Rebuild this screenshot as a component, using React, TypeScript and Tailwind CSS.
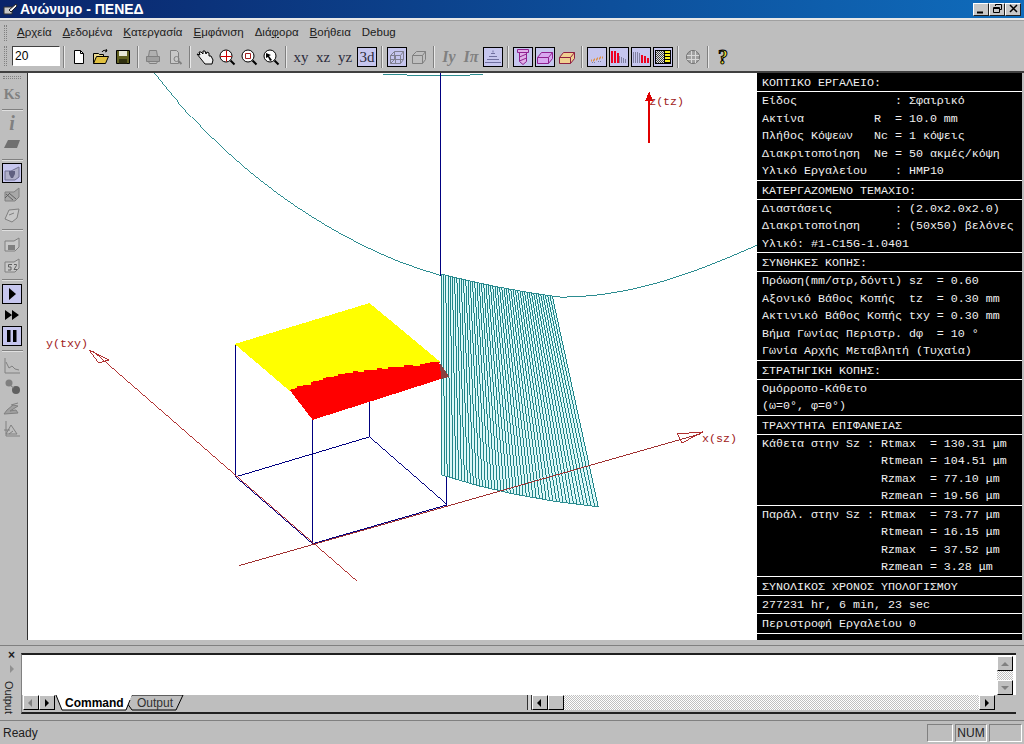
import React from "react";

const MONO = "font-['Liberation_Mono',monospace]";

const Sep = () => <div className="w-[2px] h-[22px] mx-[3px] border-l border-[#808080] bg-[#e8e8e8] shrink-0" />;

const Btn = ({ on, children }: { on?: boolean; children: React.ReactNode }) => (
  <div className="w-[22px] h-[22px] shrink-0 flex items-center justify-center">
    <div
      className={
        on
          ? "w-[20px] h-[20px] border border-black bg-[#c6c6ee] flex items-center justify-center"
          : "w-[20px] h-[20px] flex items-center justify-center"
      }
    >
      {children}
    </div>
  </div>
);

const Ico = ({ children }: { children: React.ReactNode }) => (
  <svg width="18" height="18" viewBox="0 0 18 18" fill="none" strokeWidth="1">
    {children}
  </svg>
);

const Label = ({ children }: { children: React.ReactNode }) => (
  <span className="font-['Liberation_Serif',serif] text-[15px] leading-none text-[#2a2a3a]">{children}</span>
);

const Row = ({ children }: { children: React.ReactNode }) => (
  <div className="h-[17.5px] leading-[18px] px-[5px] whitespace-pre">{children}</div>
);

const Head = ({ children }: { children: React.ReactNode }) => (
  <div className="h-[19px] leading-[20px] px-[5px] whitespace-pre border-b border-white">{children}</div>
);

const Sect = ({ rows }: { rows: string[] }) => (
  <div className="border-b border-white">
    {rows.map((r, i) => (
      <Row key={i}>{r}</Row>
    ))}
  </div>
);

const Underlined = ({ pre, u, post }: { pre?: string; u: string; post: string }) => (
  <span className="mr-[11px]">
    {pre}
    <span className="underline">{u}</span>
    {post}
  </span>
);

// wire lines of the tool flank, top and bottom curves are quadratic
const stripes = Array.from({ length: 50 }, (_, i) => {
  const t = i / 49;
  const q = (a: number, b: number, c: number) => (1 - t) * (1 - t) * a + 2 * t * (1 - t) * b + t * t * c;
  return {
    x1: q(441, 495, 552),
    y1: q(274, 288, 296),
    x2: q(441, 510, 598),
    y2: q(475, 498, 507),
  };
});

const Canvas = () => (
  <svg viewBox="27 73 730 567" className="block w-full h-full" fill="none" shapeRendering="crispEdges">
    <path d="M154 73 C 215 152 300 222 400 262 C 470 287 520 297 565 297 C 630 296 690 275 757 245" stroke="#2c8c90" />
    <path d="M382 74 L 420 75 L 462 75 L 483 74" stroke="#2c8c90" />
    <line x1="440.500" y1="73" x2="440.500" y2="276" stroke="#000080" />

    <line x1="369" y1="400" x2="369" y2="437" stroke="#000080" />
    <line x1="446.500" y1="378" x2="446.500" y2="505" stroke="#000080" />
    <polyline points="235,345 235,477 312,544 447,505 369,437 235,477" stroke="#000080" />
    <line x1="312" y1="420" x2="312" y2="544" stroke="#000080" />

    <path d="M441 274 Q 495 288 552 296 L 598 507 Q 510 498 441 475 Z" fill="#dcf8f8" />
    {stripes.map((s, i) => (
      <line key={i} x1={s.x1} y1={s.y1} x2={s.x2} y2={s.y2} stroke="#1f8488" />
    ))}
    <path d="M441 274 Q 495 288 552 296" stroke="#2c8c90" />
    <path d="M441 475 Q 510 498 598 507" stroke="#2c8c90" />

    <polygon points="234,344 369,303 440,362 289,391" fill="#ffff00" />
    <polygon
      points="289,390 296,388 296,386 310,385 310,382 322,380 322,378 337,376 337,374 352,373 352,371 363,372 363,370 376,370 376,368 387,369 387,367 404,367 404,365 420,366 420,364 430,363 430,362 438,362 447,377 312,420"
      fill="#ff0000"
    />
    <polygon points="439,362 449,377 441,379" fill="#8a4040" />

    <line x1="356" y1="581" x2="92" y2="351" stroke="#b03030" />
    <polygon points="88,350 108,360 98,363" stroke="#b03030" />
    <line x1="238" y1="566" x2="700" y2="434" stroke="#a03030" />
    <polygon points="703,432 677,434 682,443" stroke="#b03030" />
    <line x1="649" y1="143" x2="649" y2="97" stroke="#e00000" strokeWidth="2" />
    <polygon points="649,91 645,101 653,101" fill="#e00000" />

    <text x="649" y="105" className={MONO} fontSize="11.67" fill="#a02020">z(tz)</text>
    <text x="45" y="347" className={MONO} fontSize="11.67" fill="#a02020">y(txy)</text>
    <text x="702" y="442" className={MONO} fontSize="11.67" fill="#a02020">x(sz)</text>
  </svg>
);

const TopToolbar = () => (
  <div className="h-[27px] flex items-start pt-[2px] shrink-0 pl-[4px]">
    <div className="w-[3px] h-[20px] mr-[5px] border-x border-dotted border-[#808080]" />
    <div className="w-[48px] h-[20px] bg-white border border-t-[#404040] border-l-[#404040] border-r-white border-b-white pl-[2px] text-[12px] leading-[18px] text-black">
      20
    </div>
    <Sep />
    <Btn>
      <Ico>
        <path d="M4.500 2.500h6l3 3v10h-9z" fill="#fff" stroke="#000" />
        <path d="M10.500 2.500v3h3" stroke="#000" />
      </Ico>
    </Btn>
    <Btn>
      <Ico>
        <path d="M1.500 15.500v-10h5l1 1h4v2" fill="#e8d890" stroke="#000" />
        <path d="M1.500 15.500l3-7h12l-3 7z" fill="#e0c040" stroke="#000" />
        <path d="M10 4c1-2 3-2 5-1l-1-2M15 3l-2 1" stroke="#000" />
      </Ico>
    </Btn>
    <Btn>
      <Ico>
        <path d="M2.500 2.500h13v13h-13z" fill="#606020" stroke="#000" />
        <path d="M5 3h8v5H5z" fill="#e8e8d8" />
        <path d="M5 11h8v4.500H5z" fill="#303010" />
      </Ico>
    </Btn>
    <Sep />
    <Btn>
      <Ico>
        <path d="M5.500 2.500h7l1 6h-9z" fill="#b0b0b0" stroke="#808080" />
        <path d="M2.500 8.500h13v5h-13z" fill="#a0a0a0" stroke="#808080" />
        <path d="M4.500 13.500l1 2h7l1-2" stroke="#808080" />
      </Ico>
    </Btn>
    <Btn>
      <Ico>
        <path d="M4.500 2.500h6l2 2v11h-8z" fill="#c8c8c8" stroke="#808080" />
        <circle cx="10.500" cy="11" r="2.500" stroke="#808080" />
        <path d="M12.500 13l3 3" stroke="#808080" strokeWidth="2" />
      </Ico>
    </Btn>
    <Sep />
    <Btn>
      <Ico>
        <path d="M1 6l3 1-1-3 2 0 2 2 0-3 2 0 1 3 1-2 2 1 0 3 2 0 2 4-1 4H9L5 11z" fill="#f0f0f0" stroke="#000" />
      </Ico>
    </Btn>
    <Btn>
      <Ico>
        <circle cx="8" cy="8" r="6" fill="#fff" stroke="#000" />
        <path d="M8.500 2.500v11M2.500 8.500h11" stroke="#d00000" />
        <path d="M12.500 12.500l4 4" stroke="#000" strokeWidth="2" />
      </Ico>
    </Btn>
    <Btn>
      <Ico>
        <circle cx="8" cy="8" r="6" fill="#fff" stroke="#000" />
        <path d="M5.500 5.500h5v5h-5z" stroke="#a02020" />
        <path d="M12.500 12.500l4 4" stroke="#000" strokeWidth="2" />
      </Ico>
    </Btn>
    <Btn>
      <Ico>
        <circle cx="8" cy="8" r="6" fill="#fff" stroke="#000" />
        <path d="M4 5l5 2-2 1 3 4-2 1-2-4-2 1z" fill="#000" />
        <path d="M12.500 12.500l4 4" stroke="#000" strokeWidth="2" />
      </Ico>
    </Btn>
    <Sep />
    <Btn><Label>xy</Label></Btn>
    <Btn><Label>xz</Label></Btn>
    <Btn><Label>yz</Label></Btn>
    <Btn on><Label>3d</Label></Btn>
    <Sep />
    <Btn on>
      <Ico>
        <path d="M2.500 7.500h10v8h-10zM2.500 7.500l4-4h9v8l-3 4M12.500 7.500l3-4M6.500 3.500v8h9M6.500 11.500l-4 4M2.500 11.500h10M7.500 7.500v8" stroke="#808090" />
      </Ico>
    </Btn>
    <Btn>
      <Ico>
        <path d="M2.500 7.500h10v8h-10zM2.500 7.500l4-4h9v8l-3 4M12.500 7.500l3-4" stroke="#808080" />
      </Ico>
    </Btn>
    <Sep />
    <Btn>
      <span className="font-['Liberation_Serif',serif] italic font-bold text-[16px] leading-none text-[#808080]">Iy</span>
    </Btn>
    <Btn>
      <span className="font-['Liberation_Serif',serif] italic font-bold text-[16px] leading-none text-[#808080]">Iπ</span>
    </Btn>
    <Btn on>
      <Ico>
        <path d="M9 2.500v2M7 5.500h4M5 8.500h8M3 11.500h12M1 14.500h16" stroke="#7070a0" />
      </Ico>
    </Btn>
    <Sep />
    <Btn on>
      <Ico>
        <path d="M3.500 1.500h11v3h-11zM5.500 4.500h7v9l-3.500 3-3.500-3zM5.500 9l7-3M5.500 13l7-3" stroke="#902090" fill="#e0b0e8" />
      </Ico>
    </Btn>
    <Btn on>
      <Ico>
        <path d="M1.500 9.500l4-5h11v6l-4 5h-11zM1.500 9.500h11v6M12.500 9.500l4-5" stroke="#902090" fill="#d8a8f0" />
      </Ico>
    </Btn>
    <Btn>
      <Ico>
        <path d="M1.500 9.500l4-5h11v6l-4 5h-11zM1.500 9.500h11v6M12.500 9.500l4-5" stroke="#902040" fill="#f0d090" />
      </Ico>
    </Btn>
    <Sep />
    <Btn on>
      <Ico>
        <path d="M3 12.500h3M6 11.500h3M9 10.500h3M12 9.500h3" stroke="#e09040" strokeWidth="2" strokeDasharray="1 1" />
        <path d="M4 14.500h4M10 13.500h4" stroke="#8080a0" strokeDasharray="1 1" />
      </Ico>
    </Btn>
    <Btn on>
      <Ico>
        <path d="M9.500 8v7M11.500 9v6M13.500 10v5M15.500 11v4" stroke="#8080a0" />
        <path d="M2 3v12M5 3v12M8 5v10" stroke="#f00020" strokeWidth="2" />
      </Ico>
    </Btn>
    <Btn on>
      <Ico>
        <path d="M1.500 4v11M3.500 4v11M5.500 4v11M7.500 5v10" stroke="#8080a0" />
        <path d="M10 7v8M13 8v7M16 10v5" stroke="#f00020" strokeWidth="2" />
      </Ico>
    </Btn>
    <Btn on>
      <div className="w-[16px] h-[14px] border border-black flex">
        <div className="flex-1 bg-[repeating-conic-gradient(#404040_0_25%,#e0e0e0_0_50%)] bg-[length:2px_2px]" />
        <div className="w-[6px] bg-[repeating-linear-gradient(#f8f020_0_2px,#000_2px_3px)] border-l border-black" />
      </div>
    </Btn>
    <Sep />
    <Btn>
      <Ico>
        <circle cx="9" cy="9" r="6.500" fill="#a0a0a0" stroke="#707070" />
        <path d="M3 7.500h12M3 11.500h12M7.500 3v12M11.500 3v12" stroke="#d8d8d8" />
      </Ico>
    </Btn>
    <Sep />
    <Btn>
      <span className="font-['Liberation_Serif',serif] font-bold text-[20px] leading-none text-[#e8e040] [-webkit-text-stroke:1px_#000]">?</span>
    </Btn>
  </div>
);

const LeftSep = () => <div className="w-[21px] h-[2px] my-[1px] shrink-0 border-t border-[#808080] bg-[#e0e0e0]" />;

const LeftBtn = ({ on, children }: { on?: boolean; children: React.ReactNode }) => (
  <div className="h-[21px] w-[21px] shrink-0 flex items-center justify-center">
    <div
      className={
        on
          ? "h-[20px] w-[20px] border border-black bg-[#c6c6ee] flex items-center justify-center"
          : "h-[20px] w-[20px] flex items-center justify-center"
      }
    >
      {children}
    </div>
  </div>
);

const G = "#808080";

const LeftToolbar = () => (
  <div className="w-[28px] shrink-0 flex flex-col items-center pr-[3px] border-r border-[#303030]">
    <div className="w-[18px] h-[3px] mt-[3px] mb-[5px] border-y border-dotted border-[#808080]" />
    <LeftBtn>
      <span className="font-['Liberation_Serif',serif] font-bold text-[14px] leading-none text-[#808080]">Ks</span>
    </LeftBtn>
    <div className="h-[3px]" />
    <LeftSep />
    <LeftBtn>
      <span className="font-['Liberation_Serif',serif] italic font-bold text-[20px] leading-none text-[#808080]">i</span>
    </LeftBtn>
    <LeftBtn>
      <Ico>
        <path d="M1 13l4-8h12l-3 8z" fill="#707070" />
      </Ico>
    </LeftBtn>
    <div className="h-[4px]" />
    <LeftSep />
    <LeftBtn on>
      <Ico>
        <path d="M2 7l6 0 8-4v10l-4 3H2z" stroke="#707090" fill="#b0b0c8" />
        <path d="M6 7h6v3l-2 4h-2l-2-4z" fill="#606080" />
      </Ico>
    </LeftBtn>
    <LeftBtn>
      <Ico>
        <path d="M2 7h9l5-4v9l-4 4H2z" fill="#a8a8a8" stroke={G} />
        <path d="M3 9l7 6M6 8l7 6M2 13l5-5" stroke="#606060" />
      </Ico>
    </LeftBtn>
    <LeftBtn>
      <Ico>
        <path d="M2 13l4-9 10-1-2 9-5 4z" stroke={G} fill="#c8c8c8" />
        <path d="M6 9l5-2" stroke={G} />
      </Ico>
    </LeftBtn>
    <div className="h-[3px]" />
    <LeftSep />
    <div className="h-[1px]" />
    <LeftBtn>
      <Ico>
        <path d="M2 6h9l5-3v9l-4 4H2z" stroke={G} fill="#c8c8c8" />
        <path d="M5 10h7v5H5z" fill="#808080" />
      </Ico>
    </LeftBtn>
    <LeftBtn>
      <Ico>
        <path d="M2 6h9l5-3v9l-4 4H2z" stroke={G} fill="#c8c8c8" />
        <path d="M9 8.500H5.500V11H8v3H5M11 8.500h2.500v1l-2.500 4h3" stroke="#606060" />
      </Ico>
    </LeftBtn>
    <div className="h-[3px]" />
    <LeftSep />
    <div className="h-[1px]" />
    <LeftBtn on>
      <svg width="8" height="12" viewBox="0 0 8 12"><path d="M1 0l7 6-7 6z" fill="#000" /></svg>
    </LeftBtn>
    <LeftBtn>
      <svg width="14" height="10" viewBox="0 0 14 10"><path d="M0 0l7 5-7 5zM7 0l7 5-7 5z" fill="#000" /></svg>
    </LeftBtn>
    <LeftBtn on>
      <svg width="10" height="12" viewBox="0 0 10 12"><path d="M0 0h3.500v12H0zM6 0h3.500v12H6z" fill="#000" /></svg>
    </LeftBtn>
    <div className="h-[3px]" />
    <LeftSep />
    <div className="h-[2px]" />
    <LeftBtn>
      <Ico>
        <path d="M2 1v15h15" stroke={G} />
        <path d="M3 5l3 6 3-2 3 3 4 1" stroke={G} />
      </Ico>
    </LeftBtn>
    <LeftBtn>
      <Ico>
        <circle cx="6" cy="5" r="3.500" fill="#808080" />
        <circle cx="13" cy="12" r="4" fill="#606060" />
        <path d="M8 8l3 2" stroke={G} />
      </Ico>
    </LeftBtn>
    <LeftBtn>
      <Ico>
        <path d="M1 15l14-1-2-3-6 1 8-5-5-1-6 5z" fill="#a0a0a0" stroke={G} />
        <path d="M8 6l7-2" stroke={G} />
      </Ico>
    </LeftBtn>
    <LeftBtn>
      <Ico>
        <path d="M3 1v15h14" stroke={G} />
        <path d="M3 14l5-9 6 9zM1 10h6M6 14l4-3" stroke={G} />
      </Ico>
    </LeftBtn>
  </div>
);

const Panel = () => (
  <div className={`w-[265px] shrink-0 bg-black text-[#f0f0f0] text-[11.67px] ${MONO}`}>
    <Head>ΚΟΠΤΙΚΟ ΕΡΓΑΛΕΙΟ:</Head>
    <Sect
      rows={[
        "Είδος              : Σφαιρικό",
        "Ακτίνα          R  = 10.0 mm",
        "Πλήθος Κόψεων   Nc = 1 κόψεις",
        "Διακριτοποίηση  Ne = 50 ακμές/κόψη",
        "Υλικό Εργαλείου    : HMP10",
      ]}
    />
    <Head>ΚΑΤΕΡΓΑΖΟΜΕΝΟ ΤΕΜΑΧΙΟ:</Head>
    <Sect
      rows={[
        "Διαστάσεις         : (2.0x2.0x2.0)",
        "Διακριτοποίηση     : (50x50) βελόνες",
        "Υλικό: #1-C15G-1.0401",
      ]}
    />
    <Head>ΣΥΝΘΗΚΕΣ ΚΟΠΗΣ:</Head>
    <Sect
      rows={[
        "Πρόωση(mm/στρ,δόντι) sz  = 0.60",
        "Αξονικό Βάθος Κοπής  tz  = 0.30 mm",
        "Ακτινικό Βάθος Κοπής txy = 0.30 mm",
        "Βήμα Γωνίας Περιστρ. dφ  = 10 °",
        "Γωνία Αρχής Μεταβλητή (Τυχαία)",
      ]}
    />
    <Head>ΣΤΡΑΤΗΓΙΚΗ ΚΟΠΗΣ:</Head>
    <Sect rows={["Ομόρροπο-Κάθετο", "(ω=0°, φ=0°)"]} />
    <Head>ΤΡΑΧΥΤΗΤΑ ΕΠΙΦΑΝΕΙΑΣ</Head>
    <Sect
      rows={[
        "Κάθετα στην Sz : Rtmax  = 130.31 μm",
        "                 Rtmean = 104.51 μm",
        "                 Rzmax  = 77.10 μm",
        "                 Rzmean = 19.56 μm",
      ]}
    />
    <Sect
      rows={[
        "Παράλ. στην Sz : Rtmax  = 73.77 μm",
        "                 Rtmean = 16.15 μm",
        "                 Rzmax  = 37.52 μm",
        "                 Rzmean = 3.28 μm",
      ]}
    />
    <Head>ΣΥΝΟΛΙΚΟΣ ΧΡΟΝΟΣ ΥΠΟΛΟΓΙΣΜΟΥ</Head>
    <Sect rows={["277231 hr, 6 min, 23 sec"]} />
    <div className="h-[20px] leading-[20px] px-[5px] whitespace-pre border-b border-white">Περιστροφή Εργαλείου 0</div>
  </div>
);

const ScrollBtn = ({ dir, dim }: { dir: "l" | "r" | "u" | "d"; dim?: boolean }) => {
  const pts = { l: "6,1 2,5 6,9", r: "3,1 7,5 3,9", u: "1,7 5,3 9,7", d: "1,3 5,7 9,3" }[dir];
  return (
    <div className="w-[16px] h-[15px] shrink-0 bg-[#c0c0c0] border border-t-white border-l-white border-r-black border-b-black flex items-center justify-center">
      <svg width="10" height="10" viewBox="0 0 10 10">
        <polygon points={pts} fill={dim ? "#808080" : "#000"} />
      </svg>
    </div>
  );
};

const OutputPane = () => (
  <div className="h-[75px] shrink-0 mt-[5px] border-t border-[#808080] flex pt-[7px] pr-[8px]">
    <div className="w-[21px] shrink-0 flex flex-col items-center text-[#202020]">
      <span className="text-[12px] font-bold leading-[10px] -mt-[3px] ml-[2px]">×</span>
      <svg width="6" height="8" viewBox="0 0 6 8" className="mt-[5px] ml-[2px]"><path d="M1 0l4 4-4 4z" fill="#909090" /></svg>
      <span className="text-[11px] leading-none mt-[8px] -ml-[5px] [writing-mode:vertical-rl]">Output</span>
    </div>
    <div className="flex-1 flex flex-col border-t-2 border-b-2 border-l border-[#202020] border-l-[#808080] h-[61px]">
      <div className="flex-1 bg-white flex justify-end min-h-0">
        <div className="w-[16px] mr-[3px] mt-[1px] flex flex-col items-center bg-[repeating-conic-gradient(#c0c0c0_0_25%,#ffffff_0_50%)] bg-[length:2px_2px]">
          <ScrollBtn dir="u" dim />
          <div className="flex-1" />
          <ScrollBtn dir="d" dim />
        </div>
      </div>
      <div className="h-[17px] shrink-0 flex items-start bg-[#bebebe] pl-[1px] text-[12px] leading-[15px]">
        <ScrollBtn dir="l" dim />
        <ScrollBtn dir="r" />
        <svg width="130" height="17" viewBox="0 0 130 17" className="-ml-[1px] shrink-0">
          <polyline points="73,8 78,0 129,0 122,15 78,15 73,8" stroke="#000" fill="#bebebe" />
          <polygon points="2,0 8,15 72,15 78,0" fill="#fff" />
          <polyline points="2,0 8,15 72,15 76,5" stroke="#000" fill="none" />
          <text x="11" y="12" fontSize="12" fontWeight="700" fill="#000">Command</text>
          <text x="83" y="12" fontSize="12" fill="#303030">Output</text>
        </svg>
        <div className="w-[343px] shrink-0" />
        <div className="w-[5px] h-[15px] border-x border-[#303030] bg-[#d0d0d0] shrink-0" />
        <ScrollBtn dir="l" />
        <div className="w-[16px] h-[15px] shrink-0 bg-[#c0c0c0] border border-t-white border-l-white border-r-black border-b-black" />
        <div className="flex-1 h-[15px] bg-[repeating-conic-gradient(#c0c0c0_0_25%,#ffffff_0_50%)] bg-[length:2px_2px]" />
        <ScrollBtn dir="r" />
        <div className="w-[21px] shrink-0" />
      </div>
    </div>
  </div>
);

const StatusCell = ({ w, children }: { w: string; children?: React.ReactNode }) => (
  <div className={`${w} h-[18px] ml-[2px] border border-t-[#808080] border-l-[#808080] border-r-white border-b-white text-center leading-[16px]`}>
    {children}
  </div>
);

export default function App() {
  return (
    <div className="w-[1024px] h-[744px] flex flex-col overflow-hidden bg-[#bebebe] font-['Liberation_Sans',sans-serif]">
      <div className="h-[18px] shrink-0 flex items-center bg-[linear-gradient(90deg,#0a246a,#0f6cbc)] text-white pl-[3px] pr-[3px]">
        <svg width="15" height="12" viewBox="0 0 15 12" className="mr-[2px]">
          <path d="M1 4h8v7H1z" fill="#c8c8c8" stroke="#303030" />
          <path d="M6 7l7-6 1 2-6 6z" fill="#f0f0f0" stroke="#202020" />
        </svg>
        <span className="text-[14px] font-bold leading-none">Ανώνυμο - ΠΕΝΕΔ</span>
        <div className="flex-1" />
        {["min", "restore", "close"].map((k) => (
          <div
            key={k}
            className="w-[16px] h-[13px] bg-[#c8c8c8] border border-t-white border-l-white border-r-[#202020] border-b-[#202020] flex items-center justify-center"
          >
            <svg width="11" height="10" viewBox="0 0 11 10" fill="none" stroke="#000">
              {k === "min" && <path d="M1 8.500h6" strokeWidth="2" />}
              {k === "restore" && <path d="M3.500 2V.500h6v5H8M1.500 3.500h6v5h-6zM1.500 4.500h6" />}
              {k === "close" && <path d="M2 1l7 7M9 1L2 8" strokeWidth="1.500" />}
            </svg>
          </div>
        ))}
      </div>
      <div className="h-[3px] shrink-0 bg-[#e8e8e8] border-b border-[#a0a0a0]" />

      <div className="h-[23px] shrink-0 flex items-center pl-[4px] text-[11.5px] text-[#202020]">
        <div className="w-[3px] h-[16px] mr-[10px] border-x border-dotted border-[#808080]" />
        <Underlined u="Α" post="ρχεία" />
        <Underlined u="Δ" post="εδομένα" />
        <Underlined u="Κ" post="ατεργασία" />
        <Underlined u="Ε" post="μφάνιση" />
        <Underlined pre="Διά" u="φ" post="ορα" />
        <Underlined u="Β" post="οήθεια" />
        <span>Debug</span>
      </div>

      <TopToolbar />

      <div className="h-[569px] shrink-0 flex border-t-2 border-t-[#404040]">
        <LeftToolbar />
        <div className="flex-1 min-w-0 bg-white">
          <Canvas />
        </div>
        <Panel />
        <div className="w-[2px] shrink-0" />
      </div>

      <OutputPane />

      <div className="flex-1 flex items-center pl-[3px] pr-[2px] border-t border-[#808080] text-[12px] text-[#202020]">
        <span className="flex-1">Ready</span>
        <StatusCell w="w-[26px]" />
        <StatusCell w="w-[32px]">NUM</StatusCell>
        <StatusCell w="w-[33px]" />
      </div>
    </div>
  );
}
